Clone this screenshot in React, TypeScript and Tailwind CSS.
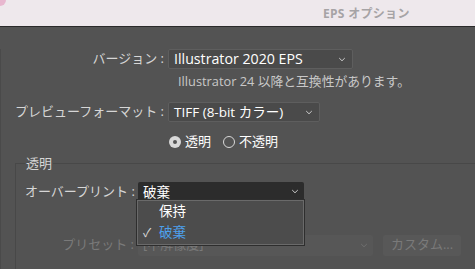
import React from 'react';

const font = { fontFamily: '"Open Sans", "Noto Sans CJK JP", sans-serif' };

const Chevron: React.FC<{ className?: string }> = ({ className }) => (
  <svg viewBox="0 0 10 6" className={className} fill="none" stroke="currentColor" strokeWidth="1.2">
    <path d="M1.5 1.2 L5 4.6 L8.5 1.2" />
  </svg>
);

export default function App() {
  return (
    <div className="w-[475px] h-[269px] overflow-hidden relative bg-[#535353] text-[13px]" style={font}>
      {/* Title bar */}
      <div className="h-[27px] bg-[#eee8ec] border-b border-[#2a2a2a] relative">
        <div className="absolute left-0 top-0 w-[6px] h-[6px] bg-[#e8b7cf] rounded-br-[6px]" />
        <div className="pl-[323px] pt-[5px] text-[12px] font-bold text-[#a6a3a5] tracking-wide">EPS オプション</div>
      </div>

      <div className="border-l border-[#4a4a4a] h-[241px] relative">
        {/* Version */}
        <div className="flex items-center mt-[22px]">
          <div className="w-[167px] pr-[4px] text-right text-[#d6d6d6] whitespace-nowrap">バージョン :</div>
          <div className="w-[185px] h-[20px] bg-[#4a4a4a] border border-[#5e5e5e] rounded-[2px] flex items-center pl-[5px] pr-[6px] text-white text-[14.2px]">
            <span className="flex-1">Illustrator 2020 EPS</span>
            <Chevron className="w-[8px] h-[5px] text-[#d0d0d0]" />
          </div>
        </div>
        <div className="pl-[177px] mt-[3px] text-[12.8px] text-[#c8c8c8] leading-[18px]">Illustrator 24 以降と互換性があります。</div>

        {/* Preview format */}
        <div className="flex items-center mt-[12px]">
          <div className="w-[167px] pr-[4px] text-right text-[#d6d6d6] whitespace-nowrap">プレビューフォーマット :</div>
          <div className="w-[152px] h-[20px] bg-[#4a4a4a] border border-[#5e5e5e] rounded-[2px] flex items-center pl-[5px] pr-[6px] text-white text-[13.5px]">
            <span className="flex-1">TIFF (8-bit カラー)</span>
            <Chevron className="w-[8px] h-[5px] text-[#d0d0d0]" />
          </div>
        </div>

        {/* Radios */}
        <div className="flex items-center mt-[10px] pl-[168px] h-[20px] text-white">
          <span className="w-[12px] h-[12px] rounded-full bg-[#d8d8d8] flex items-center justify-center">
            <span className="w-[4px] h-[4px] rounded-full bg-[#535353]" />
          </span>
          <span className="ml-[4px]">透明</span>
          <span className="ml-[12px] w-[12px] h-[12px] rounded-full border border-[#d8d8d8]" />
          <span className="ml-[4px]">不透明</span>
        </div>

        {/* Transparency group */}
        <fieldset className="ml-[14px] mt-[4px] w-[520px] h-[114px] border border-[#484848] px-[9px] pt-[0px]">
          <legend className="px-[1px] text-[#d6d6d6] leading-[14px]">透明</legend>
          <div className="flex items-center mt-[12px]">
            <div className="w-[113px] pr-[4px] text-right text-[#d6d6d6] whitespace-nowrap">オーバープリント :</div>
            <div className="w-[166px] h-[19px] bg-[#2c2c2c] rounded-[2px] flex items-center px-[5px] text-white text-[13.5px]">
              <span className="flex-1">破棄</span>
              <Chevron className="w-[8px] h-[5px] text-[#d0d0d0]" />
            </div>
          </div>
          <div className="flex items-center mt-[33px]">
            <div className="w-[113px] pr-[4px] text-right text-[#7a7a7a] whitespace-nowrap">プリセット :</div>
            <div className="w-[235px] h-[21px] bg-[#575757] rounded-[2px] flex items-center px-[5px] text-[#7a7a7a]">
              <span className="flex-1">[中解像度]</span>
              <Chevron className="w-[8px] h-[5px] text-[#707070]" />
            </div>
            <div className="ml-[10px] w-[78px] h-[21px] bg-[#585858] rounded-[2px] flex items-center justify-center text-[#7a7a7a]">カスタム...</div>
          </div>
        </fieldset>
      </div>

      {/* Open dropdown menu */}
      <div className="absolute left-[137px] top-[200px] w-[167px] h-[45px] bg-[#4c4c4c] border border-[#6a6a6a] shadow-[0_0_0_1px_#2e2e2e] text-[13.5px]">
        <div className="h-[21px] flex items-center pl-[21px] text-white">保持</div>
        <div className="h-[21px] flex items-center text-[#4da0ec]">
          <span className="w-[21px] pl-[5px] text-[#d8d8d8] text-[12px]">✓</span>
          <span>破棄</span>
        </div>
      </div>
    </div>
  );
}
